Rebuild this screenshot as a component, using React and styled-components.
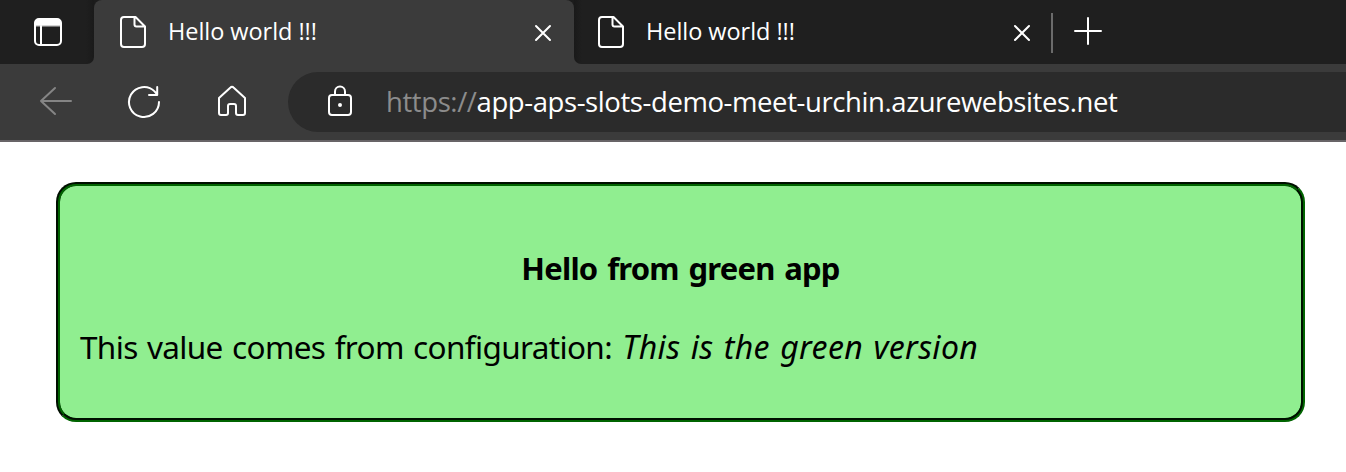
import React from "react";
import styled, { createGlobalStyle } from "styled-components";

const GlobalStyle = createGlobalStyle`
  * { box-sizing: border-box; }
  body { margin: 0; background: #fff; overflow: hidden; }
`;

const uiFont = '"Segoe UI", "Open Sans", "Noto Sans", sans-serif';
const pageFont = '"Trebuchet MS", "Noto Sans", sans-serif';

const Window = styled.div`
  width: 100%;
  height: 472px;
  overflow: hidden;
`;

const TabStrip = styled.div`
  display: flex;
  height: 64px;
  background: #3b3b3b;
`;

const StripStart = styled.div`
  width: 94px;
  padding: 18px 0 0 34px;
  background: linear-gradient(90deg, #1f1f1f 86px, #1a1a1a);
  border-bottom-right-radius: 7px;
`;

const StripRest = styled.div`
  flex: 1;
  display: flex;
  background: linear-gradient(90deg, #191919, #1f1f1f 8px);
  border-bottom-left-radius: 7px;
`;

const ActiveTabSlot = styled.div`
  width: 480px;
  background: linear-gradient(#1c1c1c 50%, #3b3b3b 50%);
`;

const Tab = styled.div`
  display: flex;
  width: ${(p) => p.$width}px;
  height: 64px;
  padding: 16px ${(p) => p.$end}px 0 ${(p) => p.$inset}px;
  background: ${(p) => (p.$active ? "#3b3b3b" : "transparent")};
  border-radius: 8px 8px 0 0;
`;

const TabTitle = styled.span`
  flex: 1;
  margin: -1px 0 0 20px;
  font: 23.5px/32px ${uiFont};
  letter-spacing: -0.05px;
  color: #fff;
  white-space: nowrap;
`;

const CloseButton = styled.span`
  width: 18px;
  height: 18px;
  margin-top: 8px;
`;

const Divider = styled.div`
  width: 2px;
  height: 40px;
  margin-top: 13px;
  background: #6b6b6b;
`;

const NewTab = styled.div`
  margin: 17px 0 0 21px;
`;

const Icon = styled.svg`
  display: block;
  flex: none;
  fill: none;
  stroke: ${(p) => p.$color || "#fff"};
  stroke-width: 2;
  stroke-linecap: round;
  stroke-linejoin: round;
`;

const Toolbar = styled.div`
  display: flex;
  height: 78px;
  padding: 8px 0 0 38px;
  background: #3b3b3b;
  border-bottom: 2px solid #686467;
`;

const NavButtons = styled.div`
  display: flex;
  gap: 52px;
  width: 250px;
  padding-top: 11px;
`;

const AddressBar = styled.div`
  flex: 1;
  display: flex;
  height: 60px;
  padding: 13px 0 0 39px;
  background: #2b2b2b;
  border-radius: 30px 0 0 30px;
`;

const Url = styled.div`
  margin-left: 33px;
  font: 27.5px/34px ${uiFont};
  letter-spacing: -0.41px;
  color: #fff;
  white-space: nowrap;
`;

const Scheme = styled.span`
  color: #8c8c8c;
`;

const Page = styled.main`
  padding: 40px 41px 0 56px;
`;

const Card = styled.section`
  height: 240px;
  padding: 63px 20px 0;
  background: #90ee90;
  border: 4px groove darkgreen;
  border-radius: 20px;
  font: 31.5px/38px ${pageFont};
  color: #000;
`;

const Heading = styled.h1`
  margin: 0;
  font-size: 31px;
  line-height: 38px;
  font-weight: 700;
  letter-spacing: -0.8px;
  word-spacing: 2.5px;
  text-align: center;
`;

const Message = styled.p`
  margin: 41px 0 0;
  letter-spacing: -0.65px;
  word-spacing: 1.8px;
  white-space: nowrap;
`;

const Value = styled.em`
  margin-left: 1px;
  font-size: 32px;
  letter-spacing: 0.36px;
  word-spacing: 1.6px;
`;

const PageIcon = () => (
  <Icon width="28" height="32" viewBox="0 0 28 32">
    <path d="M4 1H15.5L25 10.5V28a3 3 0 0 1-3 3H4a3 3 0 0 1-3-3V4a3 3 0 0 1 3-3Z M14.5 1V8.5a2 2 0 0 0 2 2H25" />
  </Icon>
);

const BrowserTab = ({ title, width, inset, end, active }) => (
  <Tab $width={width} $inset={inset} $end={end} $active={active}>
    <PageIcon />
    <TabTitle>{title}</TabTitle>
    <CloseButton>
      <Icon width="18" height="18" viewBox="0 0 18 18">
        <path d="M2 2L16 16M16 2L2 16" />
      </Icon>
    </CloseButton>
  </Tab>
);

export default function App() {
  return (
    <Window>
      <GlobalStyle />
      <TabStrip>
        <StripStart>
          <Icon width="28" height="28" viewBox="0 0 28 28">
            <rect x="1" y="1" width="26" height="26" rx="4" />
            <path d="M1 7.5V5a4 4 0 0 1 4-4H23a4 4 0 0 1 4 4V7.5Z" fill="#fff" strokeWidth="1" />
            <path d="M7 8V27" />
          </Icon>
        </StripStart>
        <ActiveTabSlot>
          <BrowserTab title="Hello world !!!" active width={480} inset={26} end={22} />
        </ActiveTabSlot>
        <StripRest>
          <BrowserTab title="Hello world !!!" width={477} inset={24} end={20} />
          <Divider />
          <NewTab>
            <Icon width="28" height="28" viewBox="0 0 28 28">
              <path d="M1 14H27M14 1V27" />
            </Icon>
          </NewTab>
        </StripRest>
      </TabStrip>
      <Toolbar>
        <NavButtons>
          <Icon width="36" height="36" viewBox="0 0 36 36" $color="#858585">
            <path d="M33 18H3M17 5L3 18L17 31" />
          </Icon>
          <Icon width="36" height="36" viewBox="0 0 36 36">
            <path d="M33 19a15 15 0 1 1-4.4-10.6L31.2 11.6M31.2 4V12H23" />
          </Icon>
          <Icon width="36" height="36" viewBox="0 0 36 36">
            <path d="M5 15L16.5 4.5a2 2 0 0 1 3 0L31 15V30a2 2 0 0 1-2 2H24a2 2 0 0 1-2-2V23a2 2 0 0 0-2-2H16a2 2 0 0 0-2 2V30a2 2 0 0 1-2 2H7a2 2 0 0 1-2-2Z" />
          </Icon>
        </NavButtons>
        <AddressBar>
          <Icon width="26" height="32" viewBox="0 0 26 32">
            <rect x="2" y="10" width="22" height="20" rx="3" />
            <path d="M8 10V6.5a5 5 0 0 1 10 0V10" />
            <circle cx="13" cy="20" r="1" fill="#fff" />
          </Icon>
          <Url>
            <Scheme>https://</Scheme>app-aps-slots-demo-meet-urchin.azurewebsites.net
          </Url>
        </AddressBar>
      </Toolbar>
      <Page>
        <Card>
          <Heading>Hello from green app</Heading>
          <Message>
            This value comes from configuration: <Value>This is the green version</Value>
          </Message>
        </Card>
      </Page>
    </Window>
  );
}
